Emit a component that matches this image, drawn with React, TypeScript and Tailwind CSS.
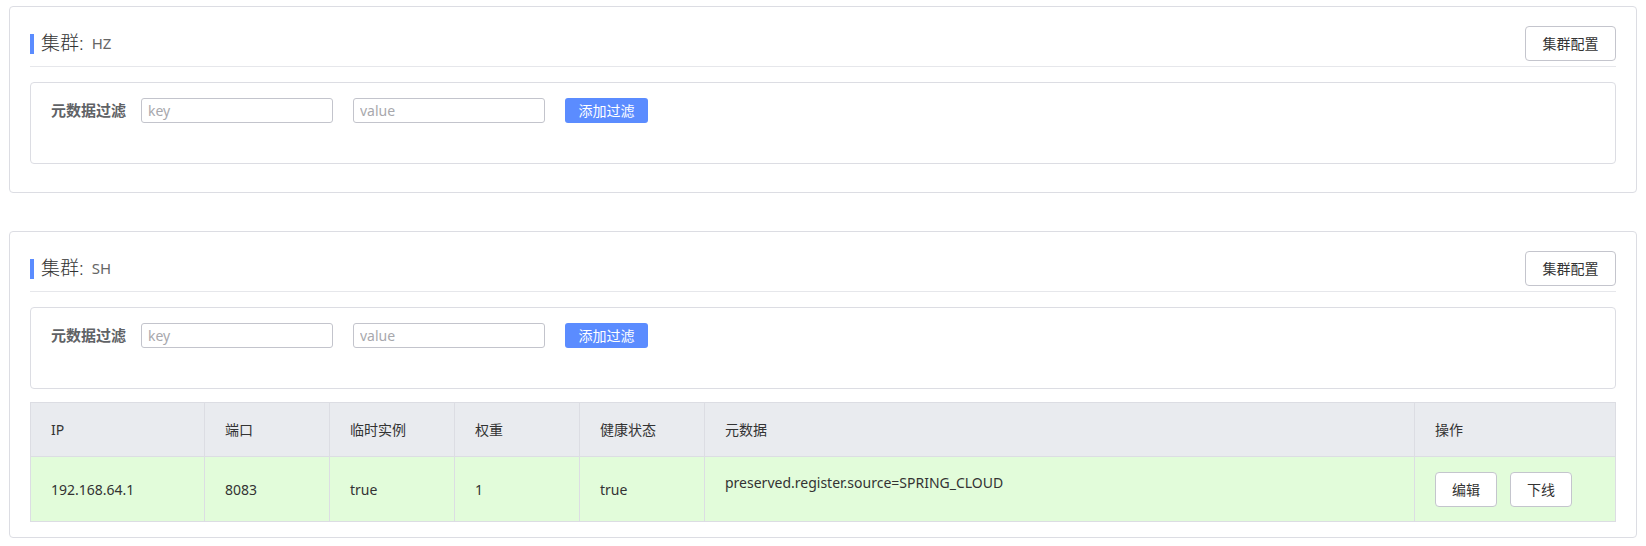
const font = { fontFamily: '"Noto Sans", "Noto Sans CJK SC", sans-serif' };

function FilterBox() {
  return (
    <div className="mt-[15px] mb-[13px] h-[82px] rounded-[4px] border border-[#dcdde3] px-5 pt-[15px]">
      <div className="flex items-center h-[25px]">
        <span className="text-[15px] font-semibold text-[#606266] w-[90px]">元数据过滤</span>
        <input
          className="h-[25px] w-[192px] rounded-[3px] border border-[#c3c4cc] px-[6px] text-[14px] text-[#333] placeholder:text-[#a8a8ad] outline-none"
          placeholder="key"
        />
        <input
          className="ml-5 h-[25px] w-[192px] rounded-[3px] border border-[#c3c4cc] px-[6px] text-[14px] text-[#333] placeholder:text-[#a8a8ad] outline-none"
          placeholder="value"
        />
        <button className="ml-5 h-[25px] w-[83px] rounded-[3px] bg-[#5b8cff] text-[14px] text-white">
          添加过滤
        </button>
      </div>
    </div>
  );
}

function ClusterHeader({ name }: { name: string }) {
  return (
    <div className="flex items-center justify-between pb-[5px] border-b border-[#e6e7eb]">
      <div className="flex items-center">
        <span className="w-[4px] h-[20px] bg-[#5b8cff]" />
        <span className="ml-[7px] text-[19px] font-light text-[#333] leading-none">集群:</span>
        <span className="ml-[8px] text-[15px] text-[#666] leading-none">{name}</span>
      </div>
      <button className="h-[35px] w-[91px] rounded-[4px] border border-[#c4c5cd] bg-white text-[14px] text-[#333]">
        集群配置
      </button>
    </div>
  );
}

const th = "border border-[#dcdde3] px-5 text-left font-normal";
const td = "border border-[#dcdde3] px-5";

export default function App() {
  return (
    <div className="min-h-[546px] bg-white pt-[6px] pl-[9px] pr-[9px] text-[#333]" style={font}>
      <div className="rounded-[4px] border border-[#dcdde3] px-5 pt-[19px] pb-[15px]">
        <ClusterHeader name="HZ" />
        <FilterBox />
      </div>

      <div className="mt-[38px] rounded-[4px] border border-[#dcdde3] px-5 pt-[19px] pb-[15px]">
        <ClusterHeader name="SH" />
        <FilterBox />
        <table className="w-full table-fixed border-collapse text-[14px] text-[#333]">
          <colgroup>
            <col className="w-[174px]" />
            <col className="w-[125px]" />
            <col className="w-[125px]" />
            <col className="w-[125px]" />
            <col className="w-[125px]" />
            <col />
            <col className="w-[201px]" />
          </colgroup>
          <thead>
            <tr className="h-[54px] bg-[#e9ebef]">
              <th className={th}>IP</th>
              <th className={th}>端口</th>
              <th className={th}>临时实例</th>
              <th className={th}>权重</th>
              <th className={th}>健康状态</th>
              <th className={th}>元数据</th>
              <th className={th}>操作</th>
            </tr>
          </thead>
          <tbody>
            <tr className="h-[65px] bg-[#e2fcda]">
              <td className={td}>192.168.64.1</td>
              <td className={td}>8083</td>
              <td className={td}>true</td>
              <td className={td}>1</td>
              <td className={td}>true</td>
              <td className={`${td} align-top pt-[15px]`}>preserved.register.source=SPRING_CLOUD</td>
              <td className={td}>
                <div className="flex gap-[13px]">
                  <button className="h-[35px] w-[62px] rounded-[4px] border border-[#c4c5cd] bg-white text-[14px] text-[#333]">
                    编辑
                  </button>
                  <button className="h-[35px] w-[62px] rounded-[4px] border border-[#c4c5cd] bg-white text-[14px] text-[#333]">
                    下线
                  </button>
                </div>
              </td>
            </tr>
          </tbody>
        </table>
      </div>
    </div>
  );
}
